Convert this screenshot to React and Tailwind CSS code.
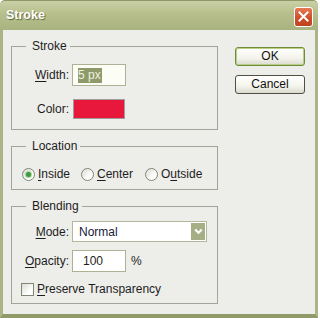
import React from "react";

const font = { fontFamily: '"Liberation Sans", Arial, sans-serif' };

function U({ children }) {
  return <span className="underline underline-offset-[2px]">{children}</span>;
}

function Group({ title, className = "", children }) {
  return (
    <fieldset className={`w-[207px] border border-[#a3a39c] ${className}`}>
      <legend className="ml-[14px] pl-[6px] pr-[3px] leading-[14px]">{title}</legend>
      {children}
    </fieldset>
  );
}

function Radio({ checked, label, className = "" }) {
  return (
    <label className={`flex items-center ${className}`}>
      <span className="flex h-[13px] w-[13px] items-center justify-center rounded-full border border-[#7f8876] bg-[linear-gradient(135deg,#dcdcd2_0%,#ffffff_70%)]">
        {checked && (
          <span className="h-[5px] w-[5px] rounded-full bg-[#3f9a3c] shadow-[0_0_1px_1px_#9fd39b]" />
        )}
      </span>
      <span className="ml-[3px] leading-[14px]">{label}</span>
    </label>
  );
}

function Button({ primary, children }) {
  return (
    <button
      className={`h-[19px] w-[70px] rounded-[3px] border bg-[linear-gradient(180deg,#ffffff_0%,#f4f3ec_60%,#dcdbcf_100%)] text-[12px] leading-[17px] text-[#111] ${
        primary
          ? "border-[#6f8c3b] shadow-[inset_0_0_0_1px_#b9cf86]"
          : "border-[#4f4f42]"
      }`}
      style={font}
    >
      {children}
    </button>
  );
}

export default function App() {
  return (
    <div className="flex h-[318px] w-[318px] flex-col text-[12px] text-[#1d1d1d]" style={font}>
      <div className="flex h-[30px] items-center justify-between rounded-t-[5px] border-t border-[#8f9866] bg-[linear-gradient(180deg,#c9d0a6_0%,#b8c18e_40%,#a9b37f_100%)] pl-[6px] pr-[5px]">
        <span className="text-[12.5px] font-bold text-white [text-shadow:1px_1px_1px_#5d6640]">Stroke</span>
        <span className="mt-[2px] flex h-[20px] w-[19px] items-center justify-center rounded-[3px] border border-white bg-[linear-gradient(180deg,#e57a52_0%,#cf4e2c_55%,#c0421f_100%)]">
          <svg width="11" height="11" viewBox="0 0 11 11">
            <path d="M1.5 1.5 L9.5 9.5 M9.5 1.5 L1.5 9.5" stroke="#ffffff" strokeWidth="2" strokeLinecap="square" />
          </svg>
        </span>
      </div>

      <div className="flex flex-1 border-x-[3px] border-b-[4px] border-x-[#abb486] border-b-[#8f9a68] bg-[#ededea]">
        <div className="flex flex-col gap-[9px] pl-[8px] pt-[9px]">
          <Group title="Stroke" className="pb-[10px]">
            <div className="mt-[11px] flex flex-col gap-[13px]">
              <div className="flex items-center">
                <span className="w-[57px] text-right">
                  <U>W</U>idth:
                </span>
                <div className="ml-[3px] flex h-[22px] w-[54px] items-center border border-[#aeb193] bg-[#fcfdf5] pl-[5px]">
                  <span className="bg-[#8e9a6b] pr-[1px] leading-[15px] text-[#eef1df]">5 px</span>
                </div>
              </div>
              <div className="flex items-center">
                <span className="w-[57px] text-right">Color:</span>
                <div className="ml-[4px] h-[20px] w-[52px] border border-[#9c9c9c] bg-[#e8183c]" />
              </div>
            </div>
          </Group>

          <Group title="Location" className="pb-[8px]">
            <div className="mt-[14px] flex pl-[10px]">
              <Radio checked className="w-[59px]" label={<><U>I</U>nside</>} />
              <Radio className="w-[64px]" label={<><U>C</U>enter</>} />
              <Radio label={<>O<U>u</U>tside</>} />
            </div>
          </Group>

          <Group title="Blending" className="pb-[7px]">
            <div className="mt-[8px] flex flex-col">
              <div className="flex items-center">
                <span className="w-[57px] text-right">
                  <U>M</U>ode:
                </span>
                <div className="ml-[3px] flex h-[21px] w-[135px] items-center justify-between border border-[#b3b79c] bg-white pl-[6px] pr-[1px]">
                  <span className="text-[#1a1a3a]">Normal</span>
                  <span className="flex h-[17px] w-[14px] items-center justify-center bg-[#a6ae86]">
                    <svg width="9" height="7" viewBox="0 0 9 7">
                      <path d="M1.2 1.5 L4.5 4.8 L7.8 1.5" fill="none" stroke="#ffffff" strokeWidth="2.2" />
                    </svg>
                  </span>
                </div>
              </div>
              <div className="mt-[8px] flex items-center">
                <span className="w-[57px] text-right">
                  <U>O</U>pacity:
                </span>
                <div className="ml-[3px] flex h-[22px] w-[54px] items-center border border-[#aeb193] bg-white pl-[10px]">
                  100
                </div>
                <span className="ml-[5px]">%</span>
              </div>
              <div className="mt-[10px] flex items-center pl-[9px]">
                <span className="h-[13px] w-[13px] border border-[#7f8876] bg-[linear-gradient(135deg,#dcdcd2_0%,#ffffff_70%)]" />
                <span className="ml-[3px] leading-[14px]">
                  <U>P</U>reserve Transparency
                </span>
              </div>
            </div>
          </Group>
        </div>

        <div className="ml-[17px] flex flex-col gap-[9px] pt-[17px]">
          <Button primary>OK</Button>
          <Button>Cancel</Button>
        </div>
      </div>
    </div>
  );
}
